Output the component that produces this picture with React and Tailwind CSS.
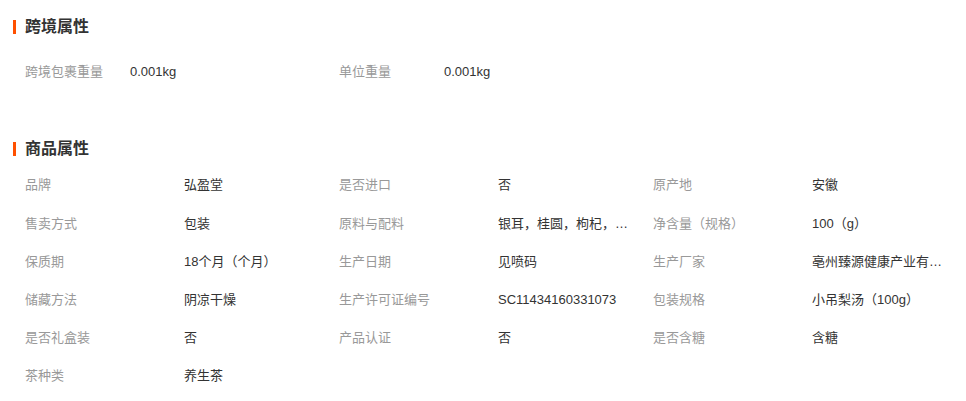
const CROSS_BORDER = [
	{ label: "跨境包裹重量", value: "0.001kg" },
	{ label: "单位重量", value: "0.001kg" },
];

const ATTRIBUTES = [
	{ label: "品牌", value: "弘盈堂" },
	{ label: "是否进口", value: "否" },
	{ label: "原产地", value: "安徽" },
	{ label: "售卖方式", value: "包装" },
	{ label: "原料与配料", value: "银耳，桂圆，枸杞，红枣，冰糖" },
	{ label: "净含量（规格）", value: "100（g）" },
	{ label: "保质期", value: "18个月（个月）" },
	{ label: "生产日期", value: "见喷码" },
	{ label: "生产厂家", value: "亳州臻源健康产业有限公司" },
	{ label: "储藏方法", value: "阴凉干燥" },
	{ label: "生产许可证编号", value: "SC11434160331073" },
	{ label: "包装规格", value: "小吊梨汤（100g）" },
	{ label: "是否礼盒装", value: "否" },
	{ label: "产品认证", value: "否" },
	{ label: "是否含糖", value: "含糖" },
	{ label: "茶种类", value: "养生茶" },
];

function SectionTitle({ children, className }) {
	return (
		<div className={"flex h-[20px] items-center " + className}>
			<span className="mr-[9px] h-[14px] w-[3px] bg-[#ff5000]" />
			<h2 className="text-[16px] font-bold leading-[20px] text-[#333]">
				{children}
			</h2>
		</div>
	);
}

export default function App() {
	return (
		<div
			className="h-[401px] w-[966px] overflow-hidden bg-white px-[13px]"
			style={{
				fontFamily:
					'"Liberation Sans", Arial, "Noto Sans CJK SC", sans-serif',
			}}
		>
			<SectionTitle className="mt-[17px]">跨境属性</SectionTitle>
			<div className="mt-[16px] grid grid-cols-[314px_314px_314px] pl-[12px]">
				{CROSS_BORDER.map((item) => (
					<div key={item.label} className="flex h-[38px] items-center text-[13px]">
						<span className="w-[105px] shrink-0 text-[#999]">{item.label}</span>
						<span className="text-[#333]">{item.value}</span>
					</div>
				))}
			</div>

			<SectionTitle className="mt-[48px]">商品属性</SectionTitle>
			<div className="mt-[7px] grid grid-cols-[314px_314px_314px] pl-[12px]">
				{ATTRIBUTES.map((item) => (
					<div key={item.label} className="flex h-[38.2px] items-center text-[13px]">
						<span className="w-[159px] shrink-0 whitespace-nowrap text-[#999]">
							{item.label}
						</span>
						<span className="w-[135px] truncate text-[#333]">{item.value}</span>
					</div>
				))}
			</div>
		</div>
	);
}
